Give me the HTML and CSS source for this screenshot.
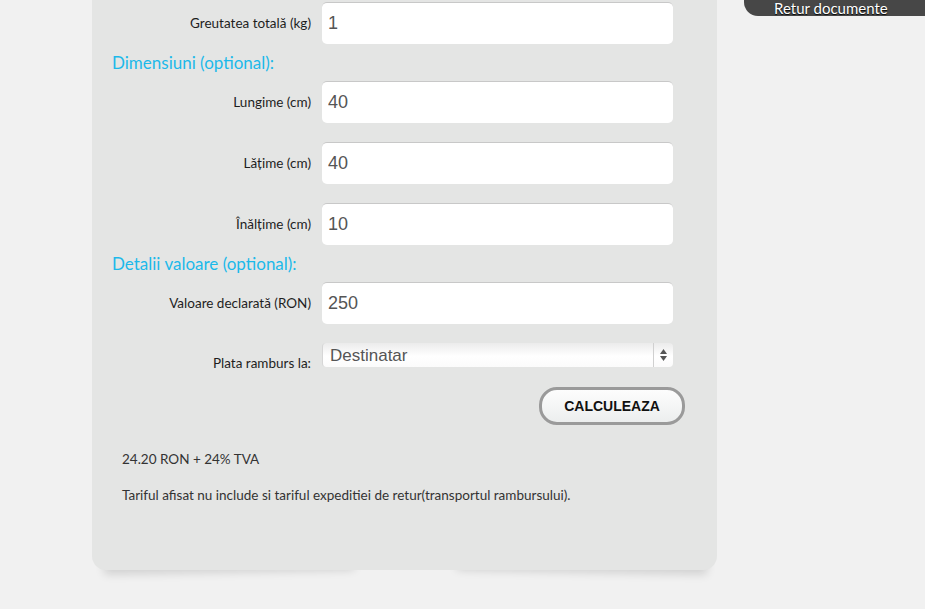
FILE: index.html
```html
<!DOCTYPE html>
<html lang="ro">

<head>
    <meta charset="UTF-8">
    <meta name="viewport" content="width=device-width, initial-scale=1.0">
    <title>Calculator tarif</title>
    <link rel="stylesheet" href="styles.css">
</head>

<body>
    <div class="page">
        <div class="panel">
            <div class="row">
                <label class="rowLabel">Greutatea totală (kg)</label>
                <input class="field" type="text" value="1">
            </div>

            <h3 class="groupTitle">Dimensiuni (optional):</h3>

            <div class="row">
                <label class="rowLabel">Lungime (cm)</label>
                <input class="field" type="text" value="40">
            </div>
            <div class="row">
                <label class="rowLabel">Lățime (cm)</label>
                <input class="field" type="text" value="40">
            </div>
            <div class="row">
                <label class="rowLabel">Înălțime (cm)</label>
                <input class="field" type="text" value="10">
            </div>

            <h3 class="groupTitle">Detalii valoare (optional):</h3>

            <div class="row">
                <label class="rowLabel">Valoare declarată (RON)</label>
                <input class="field" type="text" value="250">
            </div>
            <div class="row rowSelect">
                <label class="rowLabel">Plata ramburs la:</label>
                <div class="selectBox">
                    <select class="picker">
                        <option>Destinatar</option>
                        <option>Expeditor</option>
                    </select>
                    <span class="arrows">
                        <svg width="9" height="14" viewBox="0 0 9 14">
                            <path d="M4.5 1 L8 6 L1 6 Z" fill="#555"/>
                            <path d="M4.5 13 L8 8 L1 8 Z" fill="#555"/>
                        </svg>
                    </span>
                </div>
            </div>

            <div class="actions">
                <button class="calcBtn">CALCULEAZA</button>
            </div>

            <p class="result">24.20 RON + 24% TVA</p>
            <p class="result">Tariful afisat nu include si tariful expeditiei de retur(transportul rambursului).</p>
        </div>

        <div class="sidebar">
            <div class="tab">Retur documente</div>
        </div>
    </div>
</body>

</html>
```

FILE: styles.css
```css
html, body {
    height: 100%;
}

body {
    margin: 0;
    padding: 0;
    background-color: #f1f1f1;
    color: #222;
    font-family: "Lato", "Open Sans", sans-serif;
    overflow: hidden;
}

.page {
    display: flex;
    align-items: flex-start;
    gap: 27px;
    padding-left: 92px;
}

.panel {
    position: relative;
    width: 625px;
    box-sizing: border-box;
    padding: 2px 32px 66px 20px;
    background-color: #e4e5e4;
    border-radius: 0 0 14px 14px;
}

.panel::before,
.panel::after {
    content: "";
    position: absolute;
    z-index: -1;
    bottom: 6px;
    height: 20px;
    box-shadow: 0 8px 10px rgba(0, 0, 0, 0.14);
}

.panel::before {
    left: 12px;
    width: 250px;
    transform: rotate(-1deg);
}

.panel::after {
    right: 10px;
    width: 250px;
    transform: rotate(1deg);
}

.row {
    display: flex;
    align-items: center;
    gap: 11px;
    margin-bottom: 19px;
}

.rowLabel {
    width: 199px;
    text-align: right;
    font-size: 13.5px;
    color: #1e1e1e;
}

.field {
    width: 351px;
    height: 42px;
    box-sizing: border-box;
    padding: 0 6px;
    border: none;
    border-top: 1px solid #c8c8c8;
    border-radius: 5px;
    background-color: #fff;
    font-family: "Liberation Sans", Arial, sans-serif;
    font-size: 18px;
    color: #555;
}

.groupTitle {
    margin: -11px 0 7px;
    height: 22px;
    line-height: 22px;
    font-size: 17px;
    font-weight: normal;
    color: #1cb9ea;
}

.rowSelect {
    align-items: flex-start;
    margin-bottom: 15px;
}

.rowSelect .rowLabel {
    padding-top: 11px;
    line-height: 18px;
}

.selectBox {
    position: relative;
    width: 351px;
    height: 24px;
}

.picker {
    width: 100%;
    height: 24px;
    padding: 0 7px;
    border: none;
    border-left: 1px solid #d6d6d6;
    border-radius: 4px;
    appearance: none;
    -webkit-appearance: none;
    background: linear-gradient(#ebebeb, #fff 55%, #fbfbfb);
    font-family: "Liberation Sans", Arial, sans-serif;
    font-size: 17px;
    color: #555;
}

.arrows {
    position: absolute;
    top: 0;
    right: 0;
    width: 19px;
    height: 24px;
    display: flex;
    align-items: center;
    justify-content: center;
    border-left: 1px solid #d0d0d0;
    pointer-events: none;
}

.actions {
    display: flex;
    justify-content: flex-end;
}

.calcBtn {
    width: 146px;
    height: 38px;
    border: 3px solid #9a9a9a;
    border-radius: 18px;
    background: linear-gradient(#fdfdfd, #eceeee);
    font-family: "Liberation Sans", Arial, sans-serif;
    font-size: 14px;
    font-weight: bold;
    color: #111;
}

.result {
    margin: 25px 0 0 10px;
    line-height: 18px;
    font-size: 13.5px;
    color: #333;
}

.result + .result {
    margin-top: 18px;
}

.sidebar {
    width: 181px;
}

.tab {
    height: 16px;
    line-height: 16px;
    padding-left: 30px;
    background-color: #474747;
    border-radius: 0 0 0 14px;
    font-size: 15px;
    color: #fff;
    text-shadow: 0 1px 1px #000;
    overflow: hidden;
}
```
